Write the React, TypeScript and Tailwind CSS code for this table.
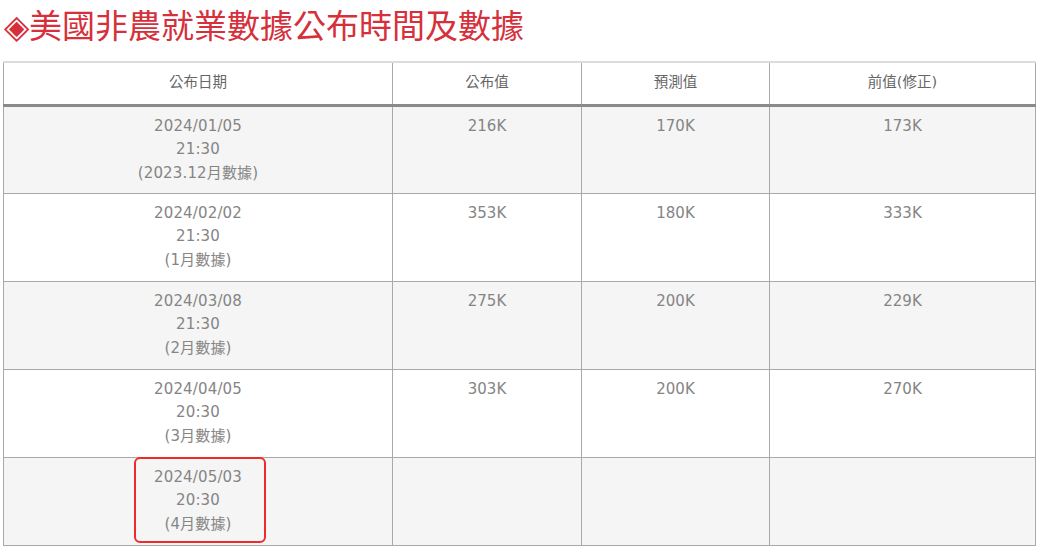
import React from 'react';

const rows = [
  { date: '2024/01/05', time: '21:30', note: '(2023.12月數據)', actual: '216K', forecast: '170K', prev: '173K' },
  { date: '2024/02/02', time: '21:30', note: '(1月數據)', actual: '353K', forecast: '180K', prev: '333K' },
  { date: '2024/03/08', time: '21:30', note: '(2月數據)', actual: '275K', forecast: '200K', prev: '229K' },
  { date: '2024/04/05', time: '20:30', note: '(3月數據)', actual: '303K', forecast: '200K', prev: '270K' },
  { date: '2024/05/03', time: '20:30', note: '(4月數據)', actual: '', forecast: '', prev: '', marked: true },
];

const font = { fontFamily: '"DejaVu Sans", "Noto Sans CJK TC", sans-serif' };
const titleFont = { fontFamily: '"Noto Sans CJK TC", sans-serif' };

export default function App() {
  return (
    <div className="w-[1038px] h-[547px] overflow-hidden bg-white" style={font}>
      <h1 className="pl-[4px] pt-[4px] h-[61px] text-[33px] leading-[40px] font-normal text-[#d5303b]" style={titleFont}>
        ◈美國非農就業數據公布時間及數據
      </h1>
      <table className="ml-[3px] w-[1032px] border-collapse table-fixed text-[15px] text-[#858585]">
        <colgroup>
          <col className="w-[389px]" />
          <col className="w-[189px]" />
          <col className="w-[188px]" />
          <col className="w-[266px]" />
        </colgroup>
        <thead>
          <tr className="h-[43px] border-t-2 border-t-[#dcdcdc] border-b-[3px] border-b-[#8a8a8a]">
            {['公布日期', '公布值', '預測值', '前值(修正)'].map((h) => (
              <th key={h} className="border-x border-x-[#a9a9a9] font-normal text-[14.5px] text-[#666] text-center align-middle">
                {h}
              </th>
            ))}
          </tr>
        </thead>
        <tbody>
          {rows.map((r, i) => (
            <tr key={r.date} className={`h-[88px] border-b border-b-[#a9a9a9] ${i % 2 === 0 ? 'bg-[#f5f5f5]' : 'bg-white'}`}>
              <td className="relative border-x border-x-[#a9a9a9] align-top text-center pt-[8px] leading-[23.5px] tracking-[0.15px]">
                <div>{r.date}</div>
                <div>{r.time}</div>
                <div>{r.note}</div>
                {r.marked && (
                  <div className="absolute left-[130px] top-[-1px] w-[132px] h-[86px] border-2 border-[#ee2b2b] rounded-[6px]" />
                )}
              </td>
              <td className="border-x border-x-[#a9a9a9] align-top text-center pt-[8px] leading-[23.5px]">{r.actual}</td>
              <td className="border-x border-x-[#a9a9a9] align-top text-center pt-[8px] leading-[23.5px]">{r.forecast}</td>
              <td className="border-x border-x-[#a9a9a9] align-top text-center pt-[8px] leading-[23.5px]">{r.prev}</td>
            </tr>
          ))}
        </tbody>
      </table>
    </div>
  );
}
